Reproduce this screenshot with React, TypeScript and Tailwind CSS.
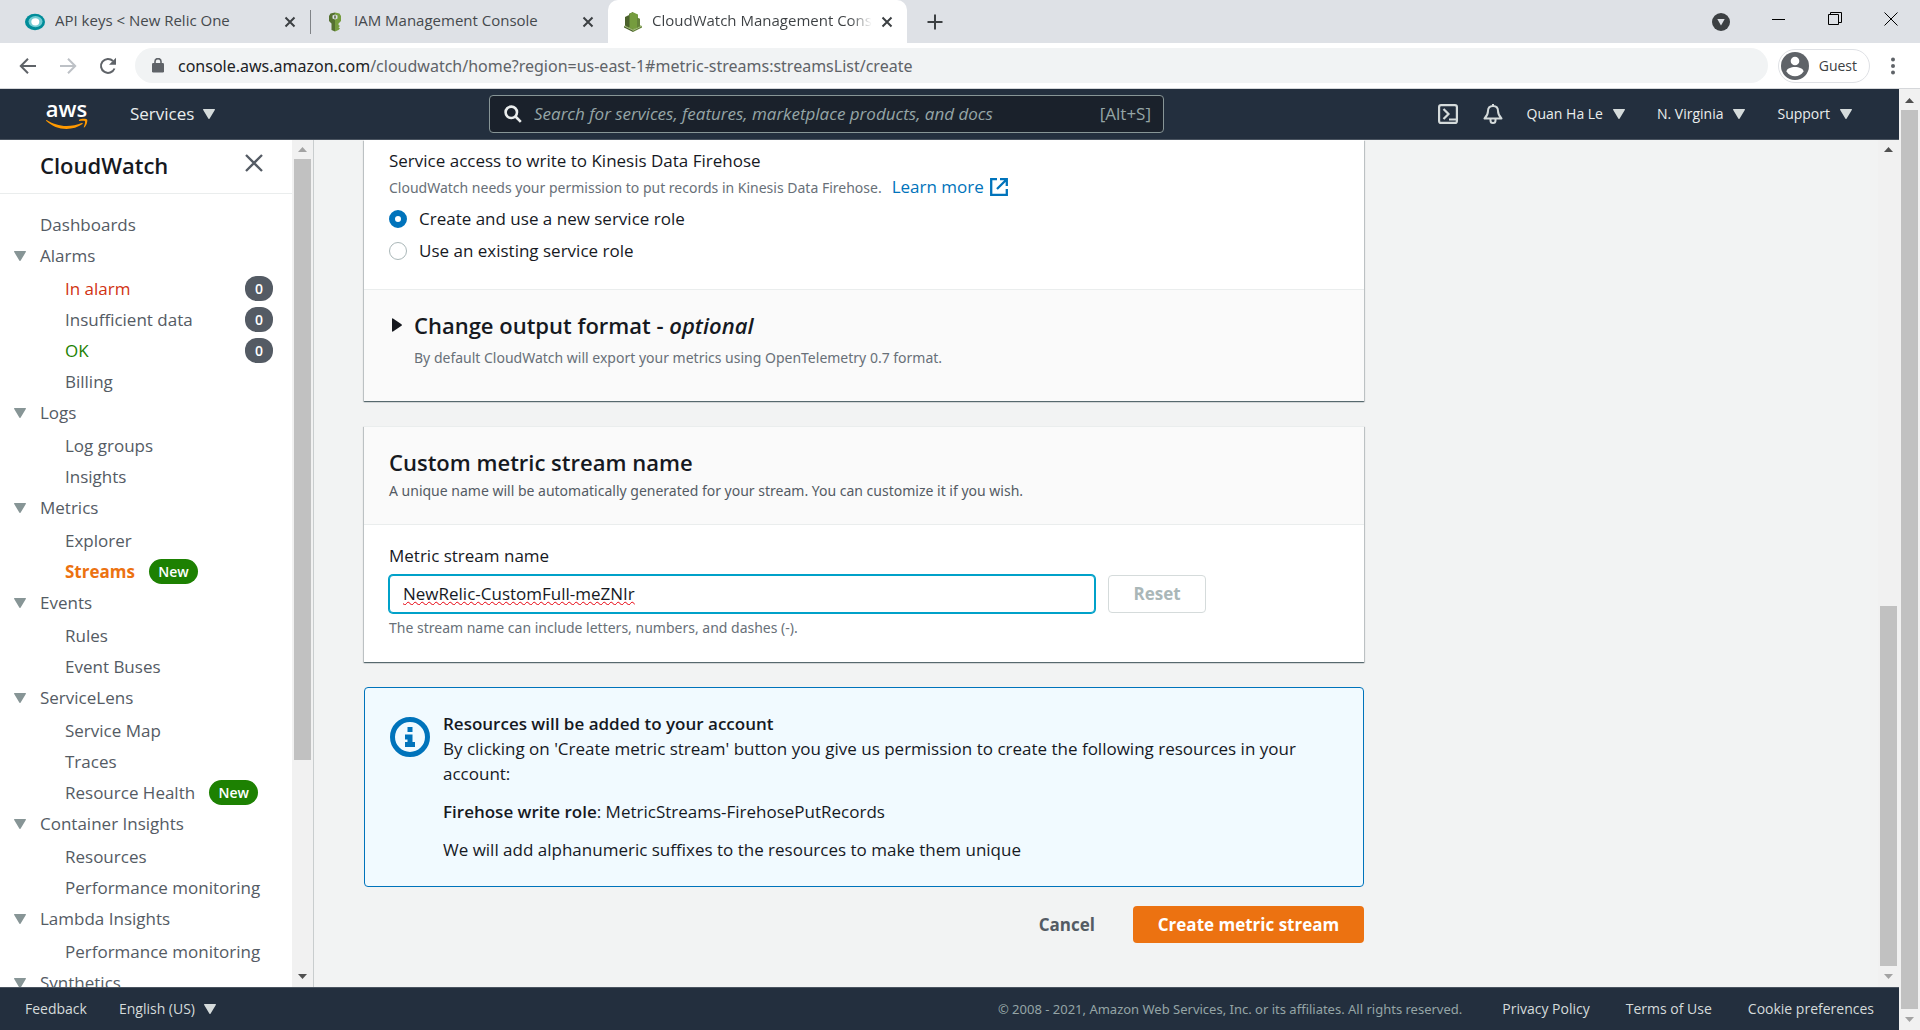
import type { ReactNode } from "react";

function Caret({ className = "" }: { className?: string }) {
  return (
    <svg viewBox="0 0 12 10" className={`h-[10px] w-3 shrink-0 fill-current ${className}`} aria-hidden="true">
      <path d="M.7 0h10.6a.6.6 0 0 1 .5 1L6.7 9.6a.8.8 0 0 1-1.4 0L.2 1A.6.6 0 0 1 .7 0z" />
    </svg>
  );
}

function TabClose() {
  return (
    <button type="button" aria-label="Close tab" className="shrink-0 text-[#3c4043]">
      <svg viewBox="0 0 12 12" className="size-3" fill="none" stroke="currentColor" strokeWidth="2">
        <path d="M1.5 1.5l9 9M10.5 1.5l-9 9" />
      </svg>
    </button>
  );
}

function NewRelicIcon() {
  return (
    <svg viewBox="0 0 20 18" className="h-[18px] w-5 shrink-0">
      <ellipse cx="10" cy="9" rx="10" ry="8.3" fill="#008c99" />
      <ellipse cx="10.5" cy="8.6" rx="7" ry="5.6" fill="#70ccd3" />
      <ellipse cx="10.3" cy="8.8" rx="4" ry="3.6" fill="#fff" />
    </svg>
  );
}

function KeyIcon() {
  return (
    <svg viewBox="0 0 14 20" className="h-5 w-3.5 shrink-0">
      <path fill="#759c3e" d="M7 .5l4.500 1L13 4v5l-2.500 2.500v1.500l1.500 1-1.500 1.200 1.500 1.300-1.500 1.500L7 19.500z" />
      <path fill="#557130" d="M7 .5l-4.500 1L1 4v5l2.500 2.500V18L7 19.500z" />
      <path fill="#dee1e6" d="M7 2.500l2.500 1v3L7 7.500l-2.500-1v-3z" />
      <path fill="#4b612c" d="M6.300 3.500h1.400v3H6.300z" />
    </svg>
  );
}

function CloudWatchIcon() {
  return (
    <svg viewBox="0 0 20 20" className="size-5 shrink-0">
      <path fill="#4b612c" d="M1 14l9 4.500V20L1 15.500z" />
      <path fill="#648339" d="M10 18.500l9-4.500v1.500L10 20z" />
      <path fill="#8cab5c" d="M1 14l9-3.500 9 3.500-9 4.500z" />
      <path fill="#4b612c" d="M2 5l4-2v12.500l-4-2zM6 2l4-2v17l-4-2z" />
      <path fill="#759c3e" d="M6.500 1.500L10 .2l5 2.300v13L10 17l-3.500-1.500z" />
      <path fill="#648339" d="M14 5.500l3 1.200v7.500l-3 1.300z" />
    </svg>
  );
}

function BrowserTab({ icon, title, className }: { icon: ReactNode; title: string; className: string }) {
  return (
    <div className={`flex h-[43px] shrink-0 items-center ${className}`}>
      {icon}
      <span className="grow truncate pb-0.5 text-[15px] text-[#45494d]">{title}</span>
      <TabClose />
    </div>
  );
}

function BrowserChrome() {
  return (
    <div className="shrink-0 border-b border-[#d5d7da]">
      <div className="flex h-[43px] bg-[#dee1e6]">
        <BrowserTab icon={<NewRelicIcon />} title="API keys < New Relic One" className="w-[310px] gap-2.5 pl-[25px] pr-3.5" />
        <div className="my-auto h-6 w-px bg-[#808387]" />
        <BrowserTab icon={<KeyIcon />} title="IAM Management Console" className="w-[297px] gap-3 pl-[17px] pr-3.5" />
        <div className="flex w-[299px] shrink-0 items-center gap-[9px] rounded-t-[10px] bg-white pl-[15px] pr-3.5">
          <CloudWatchIcon />
          <span className="w-0 grow overflow-hidden whitespace-nowrap bg-linear-to-r from-[#3c4043] from-90% to-transparent bg-clip-text pb-0.5 text-[15px] text-transparent">
            CloudWatch Management Console
          </span>
          <TabClose />
        </div>
        <button type="button" aria-label="New tab" className="ml-5 text-[#3c4043]">
          <svg viewBox="0 0 16 16" className="size-4" fill="none" stroke="currentColor" strokeWidth="2">
            <path d="M8 .5v15M.5 8h15" />
          </svg>
        </button>
        <div className="ml-auto flex items-center gap-[42px] pr-[22px] text-black">
          <button type="button" aria-label="Search tabs">
            <svg viewBox="0 0 18 18" className="size-[18px]">
              <circle cx="9" cy="9" r="9" fill="#3c4043" />
              <path d="M5.300 6h7.400L9 12.500z" fill="#dee1e6" />
            </svg>
          </button>
          <button type="button" aria-label="Minimize" className="pb-1.5">
            <svg viewBox="0 0 14 14" className="size-3.5" stroke="currentColor"><path d="M0 7.500h13" /></svg>
          </button>
          <button type="button" aria-label="Restore" className="pb-1.5">
            <svg viewBox="0 0 14 14" className="size-3.5" stroke="currentColor" fill="none">
              <path d="M.5 2.500h10v10H.5zM2.500 2.500v-2h11v10h-2.500" />
            </svg>
          </button>
          <button type="button" aria-label="Close" className="pb-1.5">
            <svg viewBox="0 0 14 14" className="size-3.5" stroke="currentColor"><path d="M.5.5l13 13M13.500.5l-13 13" /></svg>
          </button>
        </div>
      </div>
      <div className="flex h-[45px] items-center bg-white">
        <div className="flex items-center gap-[22px] pl-[19px] text-[#5f6368]">
          <button type="button" aria-label="Back">
            <svg viewBox="0 0 18 18" className="size-[18px]" fill="none" stroke="currentColor" strokeWidth="2">
              <path d="M17 9H2M9 1.800L1.800 9 9 16.200" />
            </svg>
          </button>
          <button type="button" aria-label="Forward" className="text-[#bdc1c6]">
            <svg viewBox="0 0 18 18" className="size-[18px]" fill="none" stroke="currentColor" strokeWidth="2">
              <path d="M1 9h15M9 1.800L16.200 9 9 16.200" />
            </svg>
          </button>
          <button type="button" aria-label="Reload">
            <svg viewBox="0 0 18 18" className="size-[18px]" fill="none" stroke="currentColor" strokeWidth="2">
              <path d="M15.500 11.500A7 7 0 1 1 14 4" />
              <path d="M17 .8v7H10z" fill="currentColor" stroke="none" />
            </svg>
          </button>
        </div>
        <div className="ml-[18px] flex h-[35px] grow items-center rounded-full bg-[#f1f3f4] pl-[17px]">
          <svg viewBox="0 0 12 15" className="h-[15px] w-3 shrink-0 text-[#5f6368]">
            <rect x="0" y="5" width="12" height="9.500" rx="1.200" fill="currentColor" />
            <path d="M3 6V3.600a3 3 0 0 1 6 0V6" fill="none" stroke="currentColor" strokeWidth="1.600" />
          </svg>
          <span className="ml-3.5 whitespace-nowrap font-['Noto_Sans',sans-serif] text-base text-[#5f6368]">
            <span className="text-[#202124]">console.aws.amazon.com</span>
            /cloudwatch/home?region=us-east-1#metric-streams:streamsList/create
          </span>
        </div>
        <button type="button" className="ml-2.5 flex h-[34px] items-center gap-2.5 rounded-full border border-[#dfe1e5] pl-0.5 pr-3 text-sm text-[#3c4043]">
          <svg viewBox="0 0 28 28" className="size-7">
            <circle cx="14" cy="14" r="14" fill="#5f6368" />
            <circle cx="14" cy="9" r="4.300" fill="#fff" />
            <path d="M5.500 19.500c0-3 4.500-4.600 8.500-4.600s8.500 1.600 8.500 4.600a10 10 0 0 1-17 0z" fill="#fff" />
          </svg>
          Guest
        </button>
        <button type="button" aria-label="Menu" className="ml-[21px] mr-[25px]">
          <svg viewBox="0 0 4 18" className="h-[18px] w-1" fill="#5f6368">
            <circle cx="2" cy="2.500" r="2" /><circle cx="2" cy="9" r="2" /><circle cx="2" cy="15.500" r="2" />
          </svg>
        </button>
      </div>
    </div>
  );
}

function ScrollBar({ upDark = false, downDark = false, className = "", children }: { upDark?: boolean; downDark?: boolean; className?: string; children: ReactNode }) {
  return (
    <div aria-hidden="true" className={`flex w-[21px] shrink-0 flex-col items-center bg-[#f1f1f1] ${className}`}>
      <svg viewBox="0 0 9 5" className={`my-[7px] h-[5px] w-[9px] shrink-0 ${upDark ? "text-[#505050]" : "text-[#a3a3a3]"}`}>
        <path d="M0 5L4.500 0 9 5z" fill="currentColor" />
      </svg>
      {children}
      <svg viewBox="0 0 9 5" className={`my-2 h-[5px] w-[9px] shrink-0 ${downDark ? "text-[#505050]" : "text-[#a3a3a3]"}`}>
        <path d="M0 0h9L4.500 5z" fill="currentColor" />
      </svg>
    </div>
  );
}

function NavMenu({ label }: { label: string }) {
  return (
    <button type="button" className="flex items-center gap-2.5 text-sm font-medium text-[#eaeded]">
      {label}
      <Caret className="text-[#d5dbdb]" />
    </button>
  );
}

function TopNav() {
  return (
    <header className="flex h-[51px] shrink-0 items-center border-b border-[#4a5460] bg-[#232f3e]">
      <a href="#home" aria-label="AWS home" className="ml-[45px] flex w-[43px] flex-col items-center">
        <span className="text-[22px] font-semibold leading-[19px] text-white">aws</span>
        <svg viewBox="0 0 42 11" className="h-[11px] w-[42px]" fill="#ff9900">
          <path d="M.6 2C6 5.600 13.500 8 20.500 8c5.200 0 10.700-1.200 15.300-3 .8-.3 1.400.5.700 1.100C32.300 9.300 26 11 20.500 11 12.800 11 5.800 8 .3 3c-.6-.6 0-1.200.3-1z" />
          <path d="M33 2.600c-.3-.4-.1-.7.200-.8 2-1.300 7.400-1.500 8 0 .5 1.400-.6 5.800-2.700 7.500-.5.4-1 .2-.7-.4.600-1.400 1.700-4.800 1.200-5.700-.6-.8-4-.4-5.400-.3-.3.100-.5 0-.6-.3z" />
        </svg>
      </a>
      <button type="button" className="ml-[42px] flex items-center gap-[9px] text-[17px] text-[#eaeded]">
        Services
        <Caret className="text-[#d5dbdb]" />
      </button>
      <div className="ml-auto flex h-[38px] w-[675px] items-center rounded-sm border border-[#879596] bg-[#1a212b] pl-3.5 pr-3">
        <svg viewBox="0 0 18 18" className="size-[18px] shrink-0 text-[#eaeded]" fill="none" stroke="currentColor" strokeWidth="2.600">
          <circle cx="7.300" cy="7.300" r="5.700" /><path d="M11.500 11.500l5.300 5.300" />
        </svg>
        <input
          type="text"
          aria-label="Search"
          placeholder="Search for services, features, marketplace products, and docs"
          className="ml-3 min-w-0 grow bg-transparent text-[17px] italic outline-none placeholder:text-[#95a5a6]"
        />
        <span className="text-[17px] text-[#95a5a6]">[Alt+S]</span>
      </div>
      <div className="ml-auto flex items-center pr-[47px] text-[#d5dbdb]">
        <button type="button" aria-label="CloudShell">
          <svg viewBox="0 0 20 20" className="size-5" fill="none" stroke="currentColor" strokeWidth="2.200">
            <rect x="1.100" y="1.100" width="17.800" height="17.800" rx="2" />
            <path d="M5.500 5l5 5-5 5M11 15.500h7" />
          </svg>
        </button>
        <button type="button" aria-label="Notifications" className="ml-[25px] mr-6">
          <svg viewBox="0 0 20 20" className="size-5" fill="none" stroke="currentColor" strokeWidth="2" strokeLinejoin="round">
            <path d="M10 0v2M10 2c-3.500 0-5 2.500-5 5 0 4-1.500 5.500-3.500 7.500h17C16.500 12.500 15 11 15 7c0-2.500-1.500-5-5-5z" />
            <path d="M7.500 14.500v2a2.500 2.500 0 0 0 5 0v-2" />
          </svg>
        </button>
        <div className="flex items-center gap-8">
          <NavMenu label="Quan Ha Le" />
          <NavMenu label="N. Virginia" />
          <NavMenu label="Support" />
        </div>
      </div>
    </header>
  );
}

type Item = { label: string; color?: string; count?: number; isNew?: boolean };

const groups: { label: string; items: Item[] }[] = [
  {
    label: "Alarms",
    items: [
      { label: "In alarm", color: "text-[#d13212]", count: 0 },
      { label: "Insufficient data", count: 0 },
      { label: "OK", color: "text-[#1d8102]", count: 0 },
      { label: "Billing" },
    ],
  },
  { label: "Logs", items: [{ label: "Log groups" }, { label: "Insights" }] },
  { label: "Metrics", items: [{ label: "Explorer" }, { label: "Streams", color: "font-bold text-[#ec7211]", isNew: true }] },
  { label: "Events", items: [{ label: "Rules" }, { label: "Event Buses" }] },
  { label: "ServiceLens", items: [{ label: "Service Map" }, { label: "Traces" }, { label: "Resource Health", isNew: true }] },
  { label: "Container Insights", items: [{ label: "Resources" }, { label: "Performance monitoring" }] },
  { label: "Lambda Insights", items: [{ label: "Performance monitoring" }] },
  { label: "Synthetics", items: [] },
];

function SideBar() {
  return (
    <aside className="flex w-[314px] shrink-0 border-r border-[#c9cdce] bg-white">
      <div className="flex min-w-0 grow flex-col overflow-hidden">
        <div className="flex h-[54px] shrink-0 items-center justify-between border-b border-[#eaeded] pb-0.5 pl-10 pr-[29px]">
          <h2 className="text-[22px] font-semibold text-[#16191f]">CloudWatch</h2>
          <button type="button" aria-label="Close navigation" className="mb-1.5 text-[#545b64]">
            <svg viewBox="0 0 18 18" className="size-[18px]" fill="none" stroke="currentColor" strokeWidth="2.300">
              <path d="M1 1l16 16M17 1L1 17" />
            </svg>
          </button>
        </div>
        <nav className="min-h-0 grow overflow-hidden pt-[15px] text-[17px] text-[#545b64]">
          <a href="#dashboards" className="flex h-[31px] items-center pl-10">Dashboards</a>
          {groups.map((g) => (
            <div key={g.label}>
              <button type="button" className="flex h-8 items-center gap-3.5 pl-3.5">
                <Caret className="text-[#879596]" />
                {g.label}
              </button>
              <ul className="pt-px">
                {g.items.map((it) => (
                  <li key={it.label} className="flex h-[31px] items-center pl-[65px] pr-[19px]">
                    <a href="#item" className={it.color}>{it.label}</a>
                    {it.isNew && (
                      <span className="ml-3.5 w-[49px] rounded-full bg-[#1d8102] text-center text-sm font-semibold leading-[25px] text-white">New</span>
                    )}
                    {it.count !== undefined && (
                      <span className="ml-auto w-7 rounded-xl bg-[#545b64] text-center text-sm font-semibold leading-[25px] text-white">{it.count}</span>
                    )}
                  </li>
                ))}
              </ul>
            </div>
          ))}
        </nav>
      </div>
      <ScrollBar downDark>
        <div className="w-[17px] grow-[599] bg-[#c1c1c1]" />
        <div className="grow-[205]" />
      </ScrollBar>
    </aside>
  );
}

const cardShadow = "shadow-[0_1px_1px_0_rgba(0,28,36,0.5),1px_1px_1px_0_rgba(0,28,36,0.15),-1px_1px_1px_0_rgba(0,28,36,0.15)]";

function Note({ className = "", children }: { className?: string; children: ReactNode }) {
  return <p className={`font-['Noto_Sans',sans-serif] text-sm leading-6 ${className}`}>{children}</p>;
}

function ServiceAccess() {
  return (
    <section className={`bg-white ${cardShadow}`}>
      <div role="radiogroup" aria-labelledby="access" className="px-[25px] pb-[22px] pt-2 text-[17px]">
        <div id="access" className="leading-[25px]">Service access to write to Kinesis Data Firehose</div>
        <div className="flex h-[30px] items-center">
          <Note className="text-[#687078]">CloudWatch needs your permission to put records in Kinesis Data Firehose.</Note>
          <a href="#learn" className="ml-2.5 flex items-center gap-1.5 pb-0.5 text-[#0073bb]">
            Learn more
            <svg viewBox="0 0 18 18" className="size-[18px]" fill="none" stroke="currentColor" strokeWidth="2.300">
              <path d="M7 1.200H1.200v15.600h15.600V11M10 1.200h6.800V8M16.500 1.500L7 11" />
            </svg>
          </a>
        </div>
        <label className="flex h-8 items-center gap-3">
          <input type="radio" name="role" defaultChecked className="size-[18px] appearance-none rounded-full border-[#0073bb] bg-white checked:border-[6px]" />
          Create and use a new service role
        </label>
        <label className="flex h-8 items-center gap-3">
          <input type="radio" name="role" className="size-[18px] appearance-none rounded-full border border-[#aab7b8] bg-white" />
          Use an existing service role
        </label>
      </div>
      <div className="border-t border-[#eaeded] bg-[#fafafa] px-[25px] pb-[31px] pt-[19px]">
        <button type="button" className="flex h-8 items-center text-[22px] font-semibold">
          <svg viewBox="0 0 10 14" className="ml-[3px] mr-3 h-3.5 w-2.5" fill="currentColor">
            <path d="M0 1Q0 0 1 .5l8.500 5.700q.7.800 0 1.600L1 13.500q-1 .5-1-.5z" />
          </svg>
          <span>Change output format - <i>optional</i></span>
        </button>
        <Note className="mt-[5px] pl-[25px] text-[#687078]">By default CloudWatch will export your metrics using OpenTelemetry 0.7 format.</Note>
      </div>
    </section>
  );
}

function StreamName() {
  return (
    <section className={`mt-[25px] bg-white ${cardShadow}`}>
      <div className="border-y border-[#eaeded] bg-[#fafafa] px-[25px] pb-[21px] pt-[19px]">
        <h2 className="text-[22px] font-semibold leading-8">Custom metric stream name</h2>
        <Note className="mt-px text-[#545b64]">A unique name will be automatically generated for your stream. You can customize it if you wish.</Note>
      </div>
      <div className="px-[25px] pb-[22px] pt-[18px]">
        <label htmlFor="stream" className="block text-[17px] leading-[25px]">Metric stream name</label>
        <div className="mt-[7px] flex gap-[13px]">
          <input
            id="stream"
            type="text"
            spellCheck={false}
            defaultValue="NewRelic-CustomFull-meZNIr"
            className="h-[38px] min-w-0 max-w-[706px] grow rounded-sm border border-[#00a1c9] bg-white px-[13px] pb-0.5 text-[17px] underline decoration-red-600 decoration-wavy decoration-1 shadow-[0_0_0_1px_#00a1c9] outline-none"
          />
          <button type="button" disabled className="h-[38px] w-[98px] rounded-sm border border-[#d5dbdb] bg-white text-[17px] font-bold text-[#aab7b8]">Reset</button>
        </div>
        <Note className="mt-[3px] text-[#687078]">The stream name can include letters, numbers, and dashes (-).</Note>
      </div>
    </section>
  );
}

function ResourcesInfo() {
  return (
    <section className="mt-[25px] flex gap-[13px] rounded-sm border border-[#0073bb] bg-[#f1faff] px-[25px] pb-6 pt-[23px] text-[17px] leading-[25px]">
      <svg viewBox="0 0 40 40" className="mt-1.5 size-10 shrink-0" fill="#0073bb">
        <circle cx="20" cy="20" r="17.500" fill="none" stroke="#0073bb" strokeWidth="5" />
        <path d="M17.500 10h5v5h-5zM15 17.500h7.500v7.500H25v5H15v-5h2.500v-2.500H15z" />
      </svg>
      <div>
        <h3 className="font-semibold">Resources will be added to your account</h3>
        <p>By clicking on 'Create metric stream' button you give us permission to create the following resources in your account:</p>
        <p className="mt-[13px]"><b className="font-semibold">Firehose write role</b>: MetricStreams-FirehosePutRecords</p>
        <p className="mt-[13px]">We will add alphanumeric suffixes to the resources to make them unique</p>
      </div>
    </section>
  );
}

function Footer() {
  return (
    <footer className="flex h-[43px] shrink-0 items-center border-t border-[#4a5460] bg-[#232f3e] px-[25px] text-sm font-medium text-[#d5dbdb]">
      <a href="#feedback">Feedback</a>
      <button type="button" className="ml-8 flex items-center gap-[9px]">English (US) <Caret /></button>
      <span className="ml-auto mr-10 font-['Noto_Sans',sans-serif] text-[13px] font-normal text-[#95a5a6]">© 2008 - 2021, Amazon Web Services, Inc. or its affiliates. All rights reserved.</span>
      <div className="flex gap-9">
        <a href="#privacy">Privacy Policy</a>
        <a href="#terms">Terms of Use</a>
        <a href="#cookies">Cookie preferences</a>
      </div>
    </footer>
  );
}

export default function App() {
  return (
    <div className="flex h-screen flex-col overflow-hidden bg-white font-['Open_Sans','Noto_Sans',sans-serif] text-[#16191f]">
      <BrowserChrome />
      <div className="flex min-h-0 grow">
        <div className="flex min-w-0 grow flex-col">
          <TopNav />
          <div className="flex min-h-0 grow">
            <SideBar />
            <main className="min-w-0 grow overflow-hidden bg-[#f2f3f3] pl-[50px]">
              <div className="max-w-[1000px]">
                <ServiceAccess />
                <StreamName />
                <ResourcesInfo />
                <div className="mt-[19px] flex justify-end gap-[38px]">
                  <button type="button" className="text-[17px] font-bold text-[#545b64]">Cancel</button>
                  <button type="button" className="h-[37px] w-[231px] rounded-sm bg-[#ec7211] text-[17px] font-bold text-white">Create metric stream</button>
                </div>
              </div>
            </main>
            <ScrollBar upDark>
              <div className="grow-[445]" />
              <div className="w-[17px] grow-[359] bg-[#c1c1c1]" />
            </ScrollBar>
          </div>
          <Footer />
        </div>
        <ScrollBar upDark className="pt-0.5">
          <div className="w-[17px] grow bg-[#c1c1c1]" />
        </ScrollBar>
      </div>
    </div>
  );
}
